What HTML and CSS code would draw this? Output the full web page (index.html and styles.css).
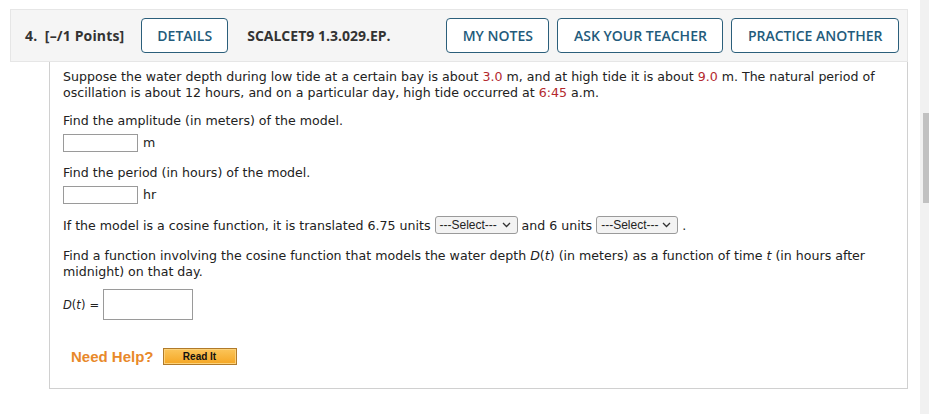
FILE: index.html
```html
<!DOCTYPE html>
<html>
<head>
<meta charset="utf-8">
<link rel="stylesheet" href="styles.css">
</head>
<body>
<div class="page">
  <div class="main">
    <div class="qhead">
      <span class="qnum">4.&nbsp; [–/1 Points]</span>
      <span class="btn btn-details">DETAILS</span>
      <span class="qcode">SCALCET9 1.3.029.EP.</span>
      <div class="actions">
        <span class="btn">MY NOTES</span>
        <span class="btn">ASK YOUR TEACHER</span>
        <span class="btn">PRACTICE ANOTHER</span>
      </div>
    </div>
    <div class="qbody">
      <p class="para p-first">Suppose the water depth during low tide at a certain bay is about <span class="val">3.0</span> m, and at high tide it is about <span class="val">9.0</span> m. The natural period of oscillation is about 12 hours, and on a particular day, high tide occurred at <span class="val">6:45</span> a.m.</p>
      <p class="para p-ask">Find the amplitude (in meters) of the model.</p>
      <div class="answer"><span class="inp"></span><span class="unit">m</span></div>
      <p class="para p-ask">Find the period (in hours) of the model.</p>
      <div class="answer"><span class="inp"></span><span class="unit">hr</span></div>
      <p class="para selrow">If the model is a cosine function, it is translated 6.75 units
        <span class="sel sel1">---Select---<svg width="9" height="6" viewBox="0 0 9 6"><path d="M1 1 L4.5 4.5 L8 1" fill="none" stroke="#333" stroke-width="1.3"/></svg></span>
        and 6 units
        <span class="sel sel2">---Select---<svg width="9" height="6" viewBox="0 0 9 6"><path d="M1 1 L4.5 4.5 L8 1" fill="none" stroke="#333" stroke-width="1.3"/></svg></span> .</p>
      <p class="para p-fn">Find a function involving the cosine function that models the water depth <i>D</i>(<i>t</i>) (in meters) as a function of time <i>t</i> (in hours after midnight) on that day.</p>
      <div class="fn"><span class="fnlabel"><i>D</i>(<i>t</i>)</span><span class="eq">=</span><span class="big-inp"></span></div>
      <div class="help">
        <span class="need">Need Help?</span>
        <span class="readit">Read It</span>
      </div>
    </div>
  </div>
  <div class="scrollbar"><div class="thumb"></div></div>
</div>
</body>
</html>
```
FILE: styles.css
```css
html, body {
  margin: 0;
  padding: 0;
  background: #fff;
}
.page {
  display: flex;
  height: 414px;
  overflow: hidden;
}
.main {
  flex: 1;
  padding: 9px 12px 0 10px;
}
.scrollbar {
  width: 9px;
  background: #f1f1f1;
}
.thumb {
  margin-top: 113px;
  margin-left: 3px;
  width: 6px;
  height: 90px;
  background: #c1c1c1;
}
.qhead {
  display: flex;
  align-items: center;
  height: 51px;
  background: #f5f5f5;
  border: 1px solid #e6e6e6;
  padding: 0 8px 0 14px;
  font-family: "Open Sans", sans-serif;
  font-weight: 700;
  font-size: 14px;
  color: #333;
}
.qnum {
  margin-right: 17px;
  letter-spacing: 0.15px;
}
.qcode {
  margin-left: 19px;
}
.actions {
  margin-left: auto;
  display: flex;
  gap: 8px;
}
.btn {
  display: inline-flex;
  align-items: center;
  height: 33px;
  padding: 0 15.5px;
  border: 1px solid #2b5f7b;
  border-radius: 4px;
  background: #fff;
  color: #235b7c;
  font-weight: 600;
  font-size: 14px;
}
.btn-details {
  padding: 0 15px;
}
.qbody {
  margin-left: 39px;
  border: 1px solid #d0d0d0;
  border-top: none;
  padding: 7px 14px 23px 13px;
  font-family: "DejaVu Sans", Verdana, sans-serif;
  font-size: 12.6px;
  line-height: 16px;
  color: #222;
}
.para {
  margin: 0;
}
.p-first {
  margin-bottom: 12px;
}
.p-ask {
  margin-bottom: 5px;
}
.val {
  color: #b3282d;
}
.answer {
  display: flex;
  align-items: center;
  margin-bottom: 13px;
}
.inp {
  display: inline-block;
  width: 73px;
  height: 16px;
  border: 1px solid #9a9a9a;
  background: #fff;
}
.unit {
  margin-left: 5px;
}
.selrow {
  margin-bottom: 13px;
}
.p-fn {
  margin-bottom: 9px;
}
.sel {
  display: inline-flex;
  align-items: center;
  justify-content: space-between;
  box-sizing: border-box;
  height: 18px;
  padding: 0 6px 0 4px;
  border: 1px solid #9a9a9a;
  border-radius: 3px;
  background: #f3f3f3;
  font-family: "Liberation Sans", Arial, sans-serif;
  font-size: 12px;
  color: #222;
  vertical-align: middle;
  position: relative;
  top: -1px;
}
.sel1 { width: 83px; }
.sel2 { width: 82px; }
.fn {
  display: flex;
  align-items: center;
}
.fnlabel {
  font-size: 11.5px;
}
.eq {
  font-size: 11.5px;
  margin: 0 4px 0 4px;
}
.big-inp {
  display: inline-block;
  width: 88px;
  height: 29px;
  border: 1px solid #9a9a9a;
  background: #fff;
}
.help {
  display: flex;
  align-items: center;
  margin-top: 28px;
  padding-left: 8px;
}
.need {
  font-family: "Liberation Sans", Arial, sans-serif;
  font-weight: 700;
  font-size: 15px;
  color: #e8892a;
  margin-right: 9px;
}
.readit {
  display: inline-flex;
  align-items: center;
  justify-content: center;
  box-sizing: border-box;
  width: 74px;
  height: 17px;
  border: 1px solid #b07a2a;
  box-shadow: inset 0 0 0 1px #fcd27a;
  background: linear-gradient(#fbc55a, #f5a623);
  font-family: "Liberation Sans", Arial, sans-serif;
  font-weight: 700;
  font-size: 10px;
  color: #111;
}
```
